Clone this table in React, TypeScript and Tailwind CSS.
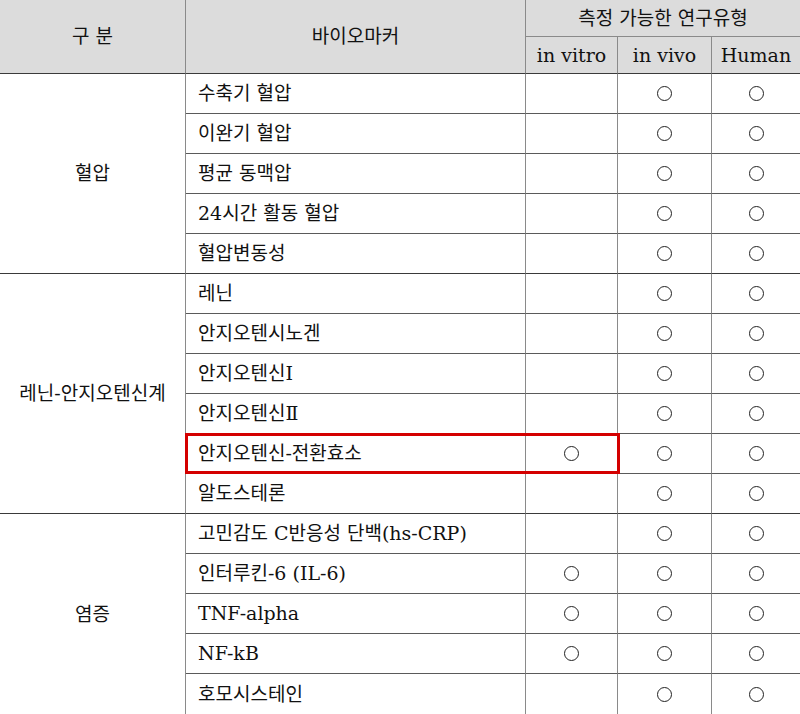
const groups = [
  {
    name: "혈압",
    rows: [
      { label: "수축기 혈압", v: [false, true, true] },
      { label: "이완기 혈압", v: [false, true, true] },
      { label: "평균 동맥압", v: [false, true, true] },
      { label: "24시간 활동 혈압", v: [false, true, true] },
      { label: "혈압변동성", v: [false, true, true] },
    ],
  },
  {
    name: "레닌-안지오텐신계",
    rows: [
      { label: "레닌", v: [false, true, true] },
      { label: "안지오텐시노겐", v: [false, true, true] },
      { label: "안지오텐신Ⅰ", v: [false, true, true] },
      { label: "안지오텐신Ⅱ", v: [false, true, true] },
      { label: "안지오텐신-전환효소", v: [true, true, true], highlight: true },
      { label: "알도스테론", v: [false, true, true] },
    ],
  },
  {
    name: "염증",
    rows: [
      { label: "고민감도 C반응성 단백(hs-CRP)", v: [false, true, true] },
      { label: "인터루킨-6 (IL-6)", v: [true, true, true] },
      { label: "TNF-alpha", v: [true, true, true] },
      { label: "NF-kB", v: [true, true, true] },
      { label: "호모시스테인", v: [false, true, true] },
    ],
  },
];

const vLine = "border-r border-r-[#8a8a8a]";
const hLine = "border-b border-b-[#3a3a3a]";

const Circle = () => (
  <span className="block size-[15px] rounded-full border border-[#222]" />
);

export default function App() {
  let rowIdx = 3;
  const total = groups.reduce((n, g) => n + g.rows.length, 0);
  const cells: React.ReactNode[] = [];
  groups.forEach((g, gi) => {
    const start = rowIdx;
    const lastGroup = gi === groups.length - 1;
    cells.push(
      <div
        key={`g${gi}`}
        className={`${vLine} ${lastGroup ? "" : hLine} flex items-center justify-center col-start-1`}
        style={{ gridRow: `${start} / span ${g.rows.length}` }}
      >
        {g.name}
      </div>
    );
    g.rows.forEach((r, ri) => {
      const row = rowIdx++;
      const lastInGroup = ri === g.rows.length - 1;
      const bottom =
        row === total + 2 ? "" : lastInGroup ? hLine : "border-b border-b-[#5a5a5a]";
      cells.push(
        <div
          key={`l${gi}-${ri}`}
          className={`${vLine} ${bottom} col-start-2 flex items-center pl-[12px]`}
          style={{ gridRow: row }}
        >
          {r.label}
        </div>
      );
      r.v.forEach((on, ci) => {
        cells.push(
          <div
            key={`c${gi}-${ri}-${ci}`}
            className={`${ci < 2 ? vLine : ""} ${bottom} flex items-center justify-center`}
            style={{ gridRow: row, gridColumn: ci + 3 }}
          >
            {on && <Circle />}
          </div>
        );
      });
      if ((r as { highlight?: boolean }).highlight) {
        cells.push(
          <div
            key={`h${gi}-${ri}`}
            className="col-start-2 col-span-2 border-[3px] border-[#d40000] -mt-px ml-[-1px] mr-[-2px] pointer-events-none"
            style={{ gridRow: row }}
          />
        );
      }
    });
  });

  return (
    <div
      className="w-[800px] h-[714px] overflow-hidden bg-white text-[#111] text-[19px]"
      style={{ fontFamily: '"DejaVu Serif", "Noto Sans CJK KR", serif' }}
    >
      <div className="grid grid-cols-[186px_340px_92px_94px_88px] grid-rows-[37px_37px_repeat(16,40px)]">
        <div className={`${vLine} ${hLine} row-span-2 bg-[#dcdcdc] flex items-center justify-center`}>
          구 분
        </div>
        <div className={`${vLine} ${hLine} row-span-2 bg-[#dcdcdc] flex items-center justify-center`}>
          바이오마커
        </div>
        <div className="col-span-3 border-b border-b-[#8a8a8a] bg-[#dcdcdc] flex items-center justify-center">
          측정 가능한 연구유형
        </div>
        <div className={`${vLine} ${hLine} bg-[#dcdcdc] flex items-center justify-center`}>
          in vitro
        </div>
        <div className={`${vLine} ${hLine} bg-[#dcdcdc] flex items-center justify-center`}>
          in vivo
        </div>
        <div className={`${hLine} bg-[#dcdcdc] flex items-center justify-center`}>
          Human
        </div>
        {cells}
      </div>
    </div>
  );
}
